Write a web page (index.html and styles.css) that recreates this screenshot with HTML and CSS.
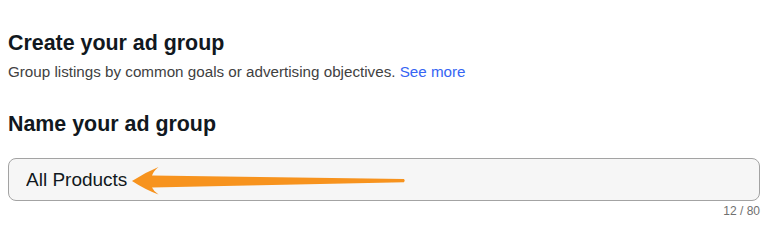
FILE: index.html
```html
<!DOCTYPE html>
<html lang="en">
  <head>
    <meta charset="UTF-8" />
    <meta name="viewport" content="width=device-width, initial-scale=1.0" />
    <title>Create your ad group</title>
    <link rel="stylesheet" href="styles.css">
  </head>
  <body>
    <div class="page">
      <h1 class="title">Create your ad group</h1>
      <p class="subtitle">
        Group listings by common goals or advertising objectives.
        <a href="#" class="link">See more</a>
      </p>
      <h2 class="title section">Name your ad group</h2>
      <div class="field">
        <input class="name-input" type="text" value="All Products" maxlength="80" />
        <!-- annotation arrow drawn over the input -->
        <svg class="arrow" viewBox="8 158 752 43" width="752" height="43">
          <path d="M132,181 Q145,172.5 158.5,167 Q153.5,171 152,175.5 L404,179 Q405.5,180.6 404,182.2 L152,187.5 Q153.5,191 158.5,194.5 Q145,189.5 132,181 Z" fill="#f7931e" />
        </svg>
      </div>
      <div class="counter">12 / 80</div>
    </div>
  </body>
</html>
```

FILE: styles.css
```css
body {
  margin: 0;
  padding: 0;
  background: #fff;
  font-family: "Liberation Sans", Arial, sans-serif;
}
.page {
  padding: 31px 8px 0;
}
.title {
  margin: 0;
  font-size: 21.4px;
  line-height: 24px;
  font-weight: bold;
  color: #111820;
}
.subtitle {
  margin: 7px 0 0;
  font-size: 15.2px;
  line-height: 20px;
  color: #41413f;
}
.link {
  color: #3665f3;
  text-decoration: none;
}
.section {
  margin-top: 30px;
}
.field {
  position: relative;
  margin-top: 22px;
}
.name-input {
  display: block;
  box-sizing: border-box;
  width: 100%;
  height: 43px;
  margin: 0;
  padding: 0 17px;
  border: 1px solid #a3a3a3;
  border-radius: 8px;
  background: #f6f6f6;
  font-family: "Liberation Sans", Arial, sans-serif;
  font-size: 19px;
  color: #111820;
  outline: none;
}
.arrow {
  position: absolute;
  left: 0;
  top: 0;
  pointer-events: none;
}
.counter {
  margin-top: 3px;
  text-align: right;
  font-size: 12px;
  line-height: 14px;
  color: #707070;
}
```
